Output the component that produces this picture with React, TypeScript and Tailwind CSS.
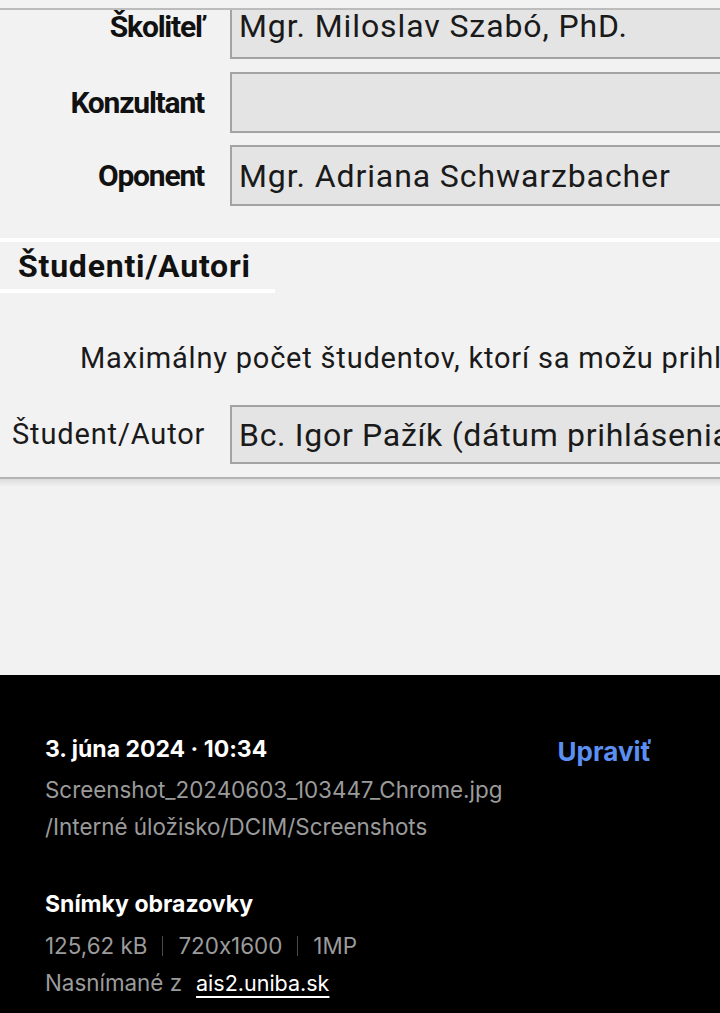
import React from "react";

const labelCls =
  "w-[204px] shrink-0 text-right font-bold text-[30px] tracking-[-1.2px] text-[#111] leading-none flex items-center justify-end";
const boxBase =
  "flex-1 ml-[26px] bg-[#e4e4e4] border-2 border-[#a3a3a3] border-r-0 flex items-center pl-[7px] text-[32px] leading-none text-[#1a1a1a] whitespace-nowrap overflow-hidden";

export default function App() {
  return (
    <div
      className="w-[720px] h-[1013px] overflow-hidden bg-[#f2f2f2]"
      style={{ fontFamily: "Roboto, 'Noto Sans', sans-serif" }}
    >
      <div className="h-[675px] flex flex-col">
        <div className="h-[8px] shrink-0" />
        <div className="h-[2px] shrink-0 bg-[#bcbcbc]" />
        {/* Školiteľ */}
        <div className="flex h-[49px] shrink-0">
          <div className={labelCls + " pb-[15px]"}>Školiteľ</div>
          <div className="flex-1 ml-[26px] bg-[#e4e4e4] border-2 border-t-0 border-r-0 border-[#a3a3a3] flex items-center pb-[16px] pl-[7px] text-[32px] tracking-[0.9px] leading-none text-[#1a1a1a] whitespace-nowrap overflow-hidden">
            Mgr. Miloslav Szabó, PhD.
          </div>
        </div>
        <div className="h-[13px] shrink-0" />
        <div className="flex h-[61px] shrink-0 items-stretch">
          <div className={labelCls}>Konzultant</div>
          <div className={boxBase + " tracking-[0.9px]"}></div>
        </div>
        <div className="h-[12px] shrink-0" />
        <div className="flex h-[61px] shrink-0 items-stretch">
          <div className={labelCls}>Oponent</div>
          <div className={boxBase + " tracking-[0.9px]"}>Mgr. Adriana Schwarzbacher</div>
        </div>
        <div className="h-[32px] shrink-0" />
        <div className="h-[4px] shrink-0 bg-white" />
        <div className="h-[47px] shrink-0 flex items-center pl-[18px] font-bold text-[32px] leading-none text-[#111] tracking-[0.8px]">
          Študenti/Autori
        </div>
        <div className="h-[4px] shrink-0 w-[275px] bg-white" />
        <div className="h-[51px] shrink-0" />
        <div className="pl-[80px] text-[29px] tracking-[0.8px] text-[#1a1a1a] whitespace-nowrap overflow-hidden leading-none">
          Maximálny počet študentov, ktorí sa možu prihlásiť
        </div>
        <div className="h-[32px] shrink-0" />
        <div className="flex h-[59px] shrink-0 items-stretch">
          <div className="w-[204px] shrink-0 pl-[12px] text-[29px] tracking-[0.85px] leading-none text-[#1a1a1a] whitespace-nowrap flex items-center">
            Študent/Autor
          </div>
          <div className={boxBase + " tracking-[0.7px]"}>Bc. Igor Pažík (dátum prihlásenia</div>
        </div>
        <div className="h-[13px] shrink-0" />
        <div className="h-[2px] shrink-0 bg-[#b4b4b4]" />
        <div className="h-[8px] shrink-0 bg-gradient-to-b from-[#dcdcdc] to-[#f2f2f2]" />
      </div>
      <div
        className="h-[338px] bg-black pl-[45px] pr-[68px] pt-[56px] [font-feature-settings:'calt'_0]"
        style={{ fontFamily: "Inter, Roboto, sans-serif" }}
      >
        <div className="flex items-start justify-between">
          <div className="text-white font-bold text-[23px] leading-[36px]">
            3. júna 2024 · 10:34
          </div>
          <div className="text-[#5b8ff0] font-bold text-[26px] leading-[36px] mt-[3px]">
            Upraviť
          </div>
        </div>
        <div className="text-[#9b9b9b] text-[22.4px] leading-[36px] mt-[2px]">
          Screenshot_20240603_103447_Chrome.jpg
        </div>
        <div className="text-[#9b9b9b] text-[22.4px] leading-[36px] mt-[1px]">
          /Interné úložisko/DCIM/Screenshots
        </div>
        <div className="text-white font-bold text-[23px] leading-[36px] mt-[41px]">
          Snímky obrazovky
        </div>
        <div className="text-[#9b9b9b] text-[22.4px] leading-[36px] mt-[6px] flex items-center">
          <span>125,62 kB</span>
          <span className="inline-block w-px h-[20px] bg-[#4a4a4a] mx-[15px]" />
          <span>720x1600</span>
          <span className="inline-block w-px h-[20px] bg-[#4a4a4a] mx-[15px]" />
          <span>1MP</span>
        </div>
        <div className="text-[22.4px] leading-[36px] mt-[1px] flex items-center">
          <span className="text-[#9b9b9b]">Nasnímané z</span>
          <span className="text-white text-[21.5px] underline underline-offset-[5px] decoration-[2px] ml-[14px]">
            ais2.uniba.sk
          </span>
        </div>
      </div>
    </div>
  );
}
